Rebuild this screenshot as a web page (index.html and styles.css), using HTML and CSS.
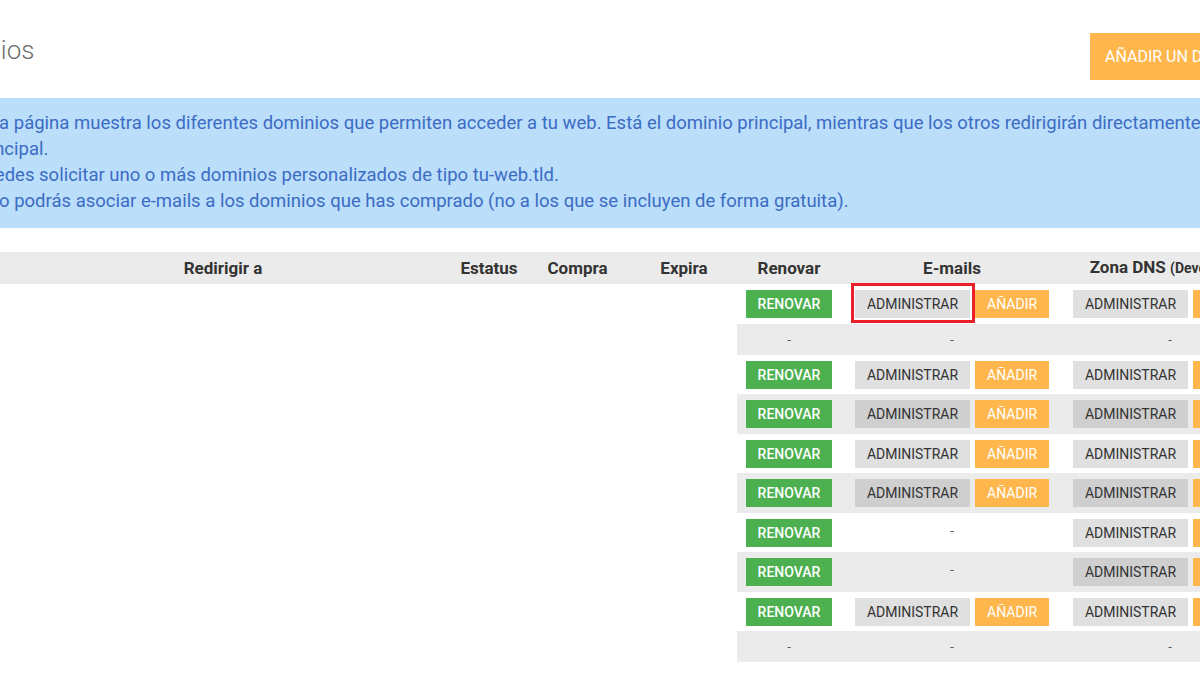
FILE: index.html
```html
<!DOCTYPE html>
<html lang="es">
<head>
    <meta charset="UTF-8">
    <meta name="viewport" content="width=device-width, initial-scale=1.0">
    <link rel="stylesheet" href="styles.css">
    <title>Dominios</title>
</head>
<body>
    <div class="page">
        <div class="top-bar">
            <h1>Dominios</h1>
            <button class="btn-add-domain">AÑADIR UN DOMINIO</button>
        </div>

        <div class="info-box">
            Esta página muestra los diferentes dominios que permiten acceder a tu web. Está el dominio principal, mientras que los otros redirigirán directamente a la<br>
            principal.<br>
            Puedes solicitar uno o más dominios personalizados de tipo tu-web.tld.<br>
            Sólo podrás asociar e-mails a los dominios que has comprado (no a los que se incluyen de forma gratuita).
        </div>

        <table class="domains">
            <colgroup>
                <col class="c-domain">
                <col class="c-redirect">
                <col class="c-status">
                <col class="c-buy">
                <col class="c-expire">
                <col class="c-renew">
                <col class="c-emails">
                <col class="c-dns">
            </colgroup>
            <thead>
                <tr>
                    <th></th>
                    <th>Redirigir a</th>
                    <th>Estatus</th>
                    <th>Compra</th>
                    <th>Expira</th>
                    <th>Renovar</th>
                    <th>E-mails</th>
                    <th>Zona DNS <small>(Developers)</small></th>
                </tr>
            </thead>
            <tbody>
                <tr>
                    <td></td><td></td><td></td><td></td><td></td>
                    <td class="act"><button class="btn green">RENOVAR</button></td>
                    <td class="act"><span class="highlight"><button class="btn grey">ADMINISTRAR</button></span><button class="btn orange">AÑADIR</button></td>
                    <td class="act"><button class="btn grey">ADMINISTRAR</button><button class="btn orange">AÑADIR</button></td>
                </tr>
                <tr class="alt dash-row">
                    <td></td><td></td><td></td><td></td><td></td>
                    <td class="act">-</td>
                    <td class="act">-</td>
                    <td class="act">-</td>
                </tr>
                <tr>
                    <td></td><td></td><td></td><td></td><td></td>
                    <td class="act"><button class="btn green">RENOVAR</button></td>
                    <td class="act"><button class="btn grey">ADMINISTRAR</button><button class="btn orange">AÑADIR</button></td>
                    <td class="act"><button class="btn grey">ADMINISTRAR</button><button class="btn orange">AÑADIR</button></td>
                </tr>
                <tr class="alt">
                    <td></td><td></td><td></td><td></td><td></td>
                    <td class="act"><button class="btn green">RENOVAR</button></td>
                    <td class="act"><button class="btn grey">ADMINISTRAR</button><button class="btn orange">AÑADIR</button></td>
                    <td class="act"><button class="btn grey">ADMINISTRAR</button><button class="btn orange">AÑADIR</button></td>
                </tr>
                <tr>
                    <td></td><td></td><td></td><td></td><td></td>
                    <td class="act"><button class="btn green">RENOVAR</button></td>
                    <td class="act"><button class="btn grey">ADMINISTRAR</button><button class="btn orange">AÑADIR</button></td>
                    <td class="act"><button class="btn grey">ADMINISTRAR</button><button class="btn orange">AÑADIR</button></td>
                </tr>
                <tr class="alt">
                    <td></td><td></td><td></td><td></td><td></td>
                    <td class="act"><button class="btn green">RENOVAR</button></td>
                    <td class="act"><button class="btn grey">ADMINISTRAR</button><button class="btn orange">AÑADIR</button></td>
                    <td class="act"><button class="btn grey">ADMINISTRAR</button><button class="btn orange">AÑADIR</button></td>
                </tr>
                <tr>
                    <td></td><td></td><td></td><td></td><td></td>
                    <td class="act"><button class="btn green">RENOVAR</button></td>
                    <td class="act dash">-</td>
                    <td class="act"><button class="btn grey">ADMINISTRAR</button><button class="btn orange">AÑADIR</button></td>
                </tr>
                <tr class="alt">
                    <td></td><td></td><td></td><td></td><td></td>
                    <td class="act"><button class="btn green">RENOVAR</button></td>
                    <td class="act dash">-</td>
                    <td class="act"><button class="btn grey">ADMINISTRAR</button><button class="btn orange">AÑADIR</button></td>
                </tr>
                <tr>
                    <td></td><td></td><td></td><td></td><td></td>
                    <td class="act"><button class="btn green">RENOVAR</button></td>
                    <td class="act"><button class="btn grey">ADMINISTRAR</button><button class="btn orange">AÑADIR</button></td>
                    <td class="act"><button class="btn grey">ADMINISTRAR</button><button class="btn orange">AÑADIR</button></td>
                </tr>
                <tr class="alt dash-row">
                    <td></td><td></td><td></td><td></td><td></td>
                    <td class="act">-</td>
                    <td class="act">-</td>
                    <td class="act">-</td>
                </tr>
            </tbody>
        </table>
    </div>
</body>
</html>
```

FILE: styles.css
```css
body {
    margin: 0;
    padding: 0;
    font-family: Roboto, "Liberation Sans", Arial, sans-serif;
    background-color: white;
    overflow: hidden;
}

/* la vista esta recortada: el contenido empieza fuera del borde izquierdo */
.page {
    width: 1341px;
    margin-left: -61px;
}

.top-bar {
    display: flex;
    justify-content: space-between;
    align-items: flex-start;
    padding: 33px 0 18px 0;
}

.top-bar h1 {
    margin: 2px 0 0 -13px;
    font-size: 26px;
    line-height: 30px;
    font-weight: 300;
    color: #707070;
}

.btn-add-domain {
    height: 47px;
    width: 190px;
    padding: 0 15px;
    border: none;
    background-color: #ffb74d;
    color: white;
    font-family: inherit;
    font-size: 16px;
    text-align: left;
}

.info-box {
    background-color: #bbdefb;
    color: #3b6cc4;
    font-size: 18.5px;
    line-height: 26px;
    padding: 12px 0 14px 34px;
    margin-bottom: 24px;
}

.domains {
    width: 1338px;
    table-layout: fixed;
    border-collapse: collapse;
}

.c-domain { width: 53px; }
.c-redirect { width: 462px; }
.c-status { width: 70px; }
.c-buy { width: 107px; }
.c-expire { width: 106px; }
.c-renew { width: 104px; }
.c-emails { width: 222px; }
.c-dns { width: 214px; }

.domains th {
    background-color: #ebebeb;
    color: #333;
    font-size: 17px;
    font-weight: bold;
    line-height: 19px;
    padding: 6px 0;
    text-align: center;
    white-space: nowrap;
}

.domains th small {
    font-size: 14px;
}

.domains td {
    padding: 6px 0 5.5px;
    text-align: center;
    font-size: 13px;
    color: #555;
    white-space: nowrap;
}

.domains td.act .btn + .btn,
.domains td.act .highlight + .btn {
    margin-left: 5px;
}

.domains tr.alt td.act {
    background-color: #ebebeb;
}

.domains tr.dash-row td {
    padding: 7px 0;
    line-height: 17px;
}

.domains td.dash {
    vertical-align: top;
    padding-top: 10px;
}

.btn {
    height: 28px;
    padding: 0 12px;
    border: none;
    font-family: inherit;
    font-size: 14px;
    vertical-align: middle;
}

.btn.green {
    background-color: #4caf50;
    color: white;
    font-weight: 500;
}

.btn.grey {
    background-color: #e0e0e0;
    color: #333;
}

.domains tr.alt .btn.grey {
    background-color: #cfcfcf;
}

.btn.orange {
    background-color: #ffb74d;
    color: white;
}

.highlight {
    position: relative;
    display: inline-block;
    vertical-align: middle;
}

.highlight .btn {
    display: block;
}

.highlight::after {
    content: "";
    position: absolute;
    top: -7px;
    left: -4px;
    right: -5px;
    bottom: -5px;
    border: 3px solid #e8202a;
}
```
